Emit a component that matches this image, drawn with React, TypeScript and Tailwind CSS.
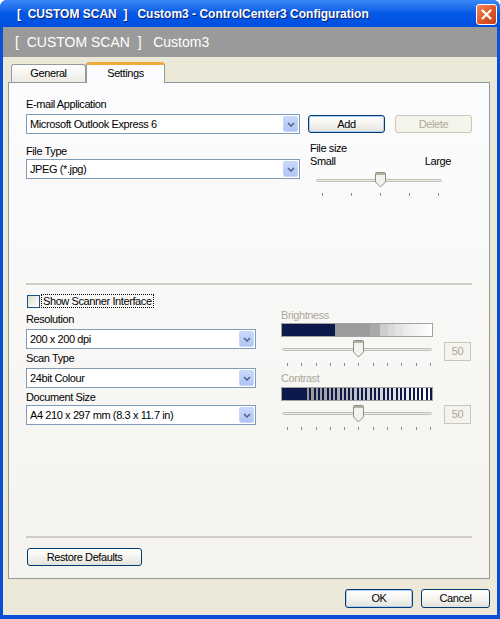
import React from 'react'

function Label({ children, className = '' }: { children: React.ReactNode; className?: string }) {
  return <div className={`h-[13px] leading-[13px] ${className}`}>{children}</div>
}

function Select({ value, className = '' }: { value: string; className?: string }) {
  return (
    <div className={`flex h-[20px] items-center border border-[#7f9db9] bg-white ${className}`}>
      <span className="flex-1 truncate pl-[3px] leading-[13px]">{value}</span>
      <span className="mr-[1px] flex h-[16px] w-[15px] items-center justify-center rounded-[2px] border border-[#c7d6f8] bg-gradient-to-b from-[#cad9fc] to-[#afc5f5]">
        <svg width="8" height="5" viewBox="0 0 8 5">
          <path d="M1 1l3 3 3-3" fill="none" stroke="#4d6185" strokeWidth="1.5" />
        </svg>
      </span>
    </div>
  )
}

function Button({
  children,
  className = '',
  disabled = false,
  isDefault = false,
}: {
  children: React.ReactNode
  className?: string
  disabled?: boolean
  isDefault?: boolean
}) {
  const look = disabled
    ? 'border-[#c9c7ba] bg-[#f5f4ea] text-[#aca899]'
    : 'border-[#003c74] bg-gradient-to-b from-white via-[#f5f4ef] to-[#e2e1da] text-black'
  const ring = isDefault ? 'shadow-[inset_0_0_0_1px_#b4cbf4]' : ''
  return (
    <div className={`flex items-center justify-center rounded-[3px] border leading-[13px] ${look} ${ring} ${className}`}>
      {children}
    </div>
  )
}

function Thumb({ h }: { h: number }) {
  return (
    <svg width="11" height={h} viewBox={`0 0 11 ${h}`}>
      <path
        d={`M1.5 .5H9.5Q10.5 .5 10.5 1.5V${h - 6}L5.5 ${h - 1}L.5 ${h - 6}V1.5Q.5 .5 1.5 .5Z`}
        fill="#f3f2ec"
        stroke="#8e8d86"
      />
      <rect x="1" y="1" width="9" height="2" fill="#b3b0a2" />
    </svg>
  )
}

function Ticks({ count, className = '' }: { count: number; className?: string }) {
  return (
    <div className={`flex h-[3px] justify-between ${className}`}>
      {Array.from({ length: count }, (_, i) => (
        <div key={i} className="h-[3px] w-px bg-[#8a8a86]" />
      ))}
    </div>
  )
}

function Track({ className = '' }: { className?: string }) {
  return <div className={`absolute left-0 right-0 h-[3px] rounded-[2px] border border-[#c0bfb6] bg-[#ebeae4] ${className}`} />
}

function BrightnessBar() {
  return (
    <div className="flex h-[14px] w-[152px] border border-[#a3a3a0]">
      <div className="w-[53px] bg-[#0b1a4b]" />
      <div className="w-[35px] bg-[#9b9b9b]" />
      <div className="w-[10px] bg-[#a9a9a9]" />
      <div className="w-[8px] bg-[#cdcdcd]" />
      <div className="w-[7px] bg-[#d9d9d9]" />
      <div className="w-[8px] bg-[#e3e3e3]" />
      <div className="flex-1 bg-gradient-to-r from-[#e9e9e9] to-white" />
    </div>
  )
}

function ContrastBar() {
  const stripes = Array.from({ length: 29 }, (_, i) => i / 28)
  return (
    <div className="flex h-[14px] w-[152px] border border-[#a3a3a0] bg-[#0b1a4b]">
      <div className="w-[25px]" />
      {stripes.map((t, i) => {
        const c = Math.round(150 + t * 105)
        return (
          <div key={i} className="flex flex-1">
            <div className="flex-1" style={{ background: `rgb(${c},${c},${c})` }} />
            <div className="w-[2px]" />
          </div>
        )
      })}
    </div>
  )
}

function ValueBox({ className = '' }: { className?: string }) {
  return (
    <div className={`ml-[12px] flex h-[19px] w-[27px] items-center justify-center border border-[#c9c7ba] bg-[#f4f3ee] text-[#aca899] ${className}`}>
      50
    </div>
  )
}

export default function App() {
  return (
    <div className="flex h-[619px] w-[500px] flex-col overflow-hidden rounded-t-[7px] bg-[#0a4fd6] font-['Liberation_Sans',Arial,sans-serif] text-[11px] tracking-[-0.4px] text-black">
      {/* title bar */}
      <div className="flex h-[27px] shrink-0 items-center bg-gradient-to-b from-[#3b89f6] via-[#0458e6] to-[#0050e0] pl-[17px] pr-[3px]">
        <span className="flex-1 whitespace-pre text-[12px] font-bold tracking-normal text-white [text-shadow:1px_1px_0_#0a1e6e]">
          {'[  CUSTOM SCAN  ]   Custom3 - ControlCenter3 Configuration'}
        </span>
        <div className="mt-[2px] flex h-[21px] w-[21px] items-center justify-center rounded-[3px] border border-white bg-gradient-to-br from-[#f08a5d] via-[#e2582b] to-[#c8401a]">
          <svg width="11" height="11" viewBox="0 0 11 11">
            <path d="M1.5 1.5l8 8M9.5 1.5l-8 8" stroke="white" strokeWidth="2.2" strokeLinecap="round" />
          </svg>
        </div>
      </div>

      <div className="flex flex-1 flex-col px-[3px] pb-[4px]">
        {/* gray header */}
        <div className="flex h-[30px] shrink-0 items-center bg-[#9a9a9a] pl-[12px] text-[14px] tracking-normal text-white">
          <span className="whitespace-pre">{'[  CUSTOM SCAN  ]   Custom3'}</span>
        </div>

        <div className="flex flex-1 flex-col bg-[#ece9d8] pl-[5px] pr-[7px] pt-[5px]">
          {/* tabs */}
          <div className="ml-[3px] flex h-[20px] items-end">
            <div className="flex h-[18px] w-[75px] items-center justify-center rounded-t-[3px] border border-b-0 border-[#919b9c] bg-gradient-to-b from-white to-[#ecebe4] leading-[13px]">
              General
            </div>
            <div className="relative top-[1px] z-10 flex h-[21px] w-[79px] items-center justify-center rounded-t-[3px] border-x border-t-[3px] border-x-[#919b9c] border-t-[#f0a93b] bg-[#fcfcfe] pb-[2px] leading-[13px]">
              Settings
            </div>
          </div>

          {/* panel */}
          <div className="flex h-[497px] flex-col border border-[#919b9c] bg-gradient-to-b from-[#fcfcfe] to-[#f4f3ee] px-[17px] pt-[15px]">
            <div className="flex">
              <div className="w-[274px]">
                <Label>E-mail Application</Label>
                <Select className="mt-[3px]" value="Microsoft Outlook Express 6" />
              </div>
              <div className="ml-[8px] mt-[17px] flex gap-[10px]">
                <Button className="h-[18px] w-[77px]" isDefault>
                  Add
                </Button>
                <Button className="h-[18px] w-[77px]" disabled>
                  Delete
                </Button>
              </div>
            </div>

            <div className="flex">
              <div className="w-[274px] pt-[11px]">
                <Label>File Type</Label>
                <Select className="mt-[1px]" value="JPEG (*.jpg)" />
              </div>
              <div className="ml-[10px] w-[141px] pt-[8px]">
                <Label>File size</Label>
                <div className="flex h-[13px] justify-between leading-[13px]">
                  <span>Small</span>
                  <span>Large</span>
                </div>
                <div className="relative ml-[6px] mt-[4px] h-[16px] w-[126px]">
                  <Track className="top-[7px]" />
                  <div className="absolute left-[59px] top-0">
                    <Thumb h={16} />
                  </div>
                </div>
                <Ticks count={5} className="ml-[6px] mt-[5px] w-[126px] pl-[6px] pr-[3px]" />
              </div>
            </div>

            <div className="mt-[87px] h-[2px] bg-[#cfcdc4]" />

            <div className="mt-[9px] flex">
              <div className="w-[230px]">
                <div className="flex h-[14px] items-center">
                  <div className="ml-[1px] h-[13px] w-[13px] border border-[#1c5180] bg-gradient-to-br from-[#dcdcd5] to-white" />
                  <span className="ml-px border border-dotted border-black px-[1px] leading-[12px]">Show Scanner Interface</span>
                </div>
                <Label className="mt-[5px]">Resolution</Label>
                <Select className="mt-[3px]" value="200 x 200 dpi" />
                <Label className="mt-[3px]">Scan Type</Label>
                <Select className="mt-[3px]" value="24bit Colour" />
                <Label className="mt-[3px]">Document Size</Label>
                <Select className="mt-[1px]" value="A4 210 x 297 mm (8.3 x 11.7 in)" />
              </div>

              <div className="ml-[25px] w-[191px] pt-[16px]">
                <Label className="mt-[-1px] text-[#aca899]">Brightness</Label>
                <div className="mt-[1px]">
                  <BrightnessBar />
                </div>
                <div className="mt-[2px] flex">
                  <div className="relative ml-[1px] h-[20px] w-[150px]">
                    <Track className="top-[9px]" />
                    <div className="absolute left-[71px] top-[1px]">
                      <Thumb h={18} />
                    </div>
                  </div>
                  <ValueBox className="mt-[3px]" />
                </div>
                <Ticks count={11} className="ml-[1px] mt-[2px] w-[150px] pl-[5px] pr-[1px]" />

                <Label className="mt-[6px] text-[#aca899]">Contrast</Label>
                <div className="mt-[2px]">
                  <ContrastBar />
                </div>
                <div className="mt-[3px] flex">
                  <div className="relative ml-[1px] h-[20px] w-[150px]">
                    <Track className="top-[8px]" />
                    <div className="absolute left-[71px] top-[1px]">
                      <Thumb h={18} />
                    </div>
                  </div>
                  <ValueBox className="mt-[1px]" />
                </div>
                <Ticks count={11} className="ml-[1px] mt-[3px] w-[150px] pl-[5px] pr-[1px]" />
              </div>
            </div>

            <div className="mt-auto h-[2px] bg-[#cfcdc4]" />
            <Button className="mb-[12px] ml-[1px] mt-[10px] h-[18px] w-[115px]">Restore Defaults</Button>
          </div>

          {/* dialog buttons */}
          <div className="mt-[10px] flex justify-end gap-[8px]">
            <Button className="h-[19px] w-[68px]" isDefault>
              OK
            </Button>
            <Button className="h-[19px] w-[69px]">Cancel</Button>
          </div>
        </div>
      </div>
    </div>
  )
}
